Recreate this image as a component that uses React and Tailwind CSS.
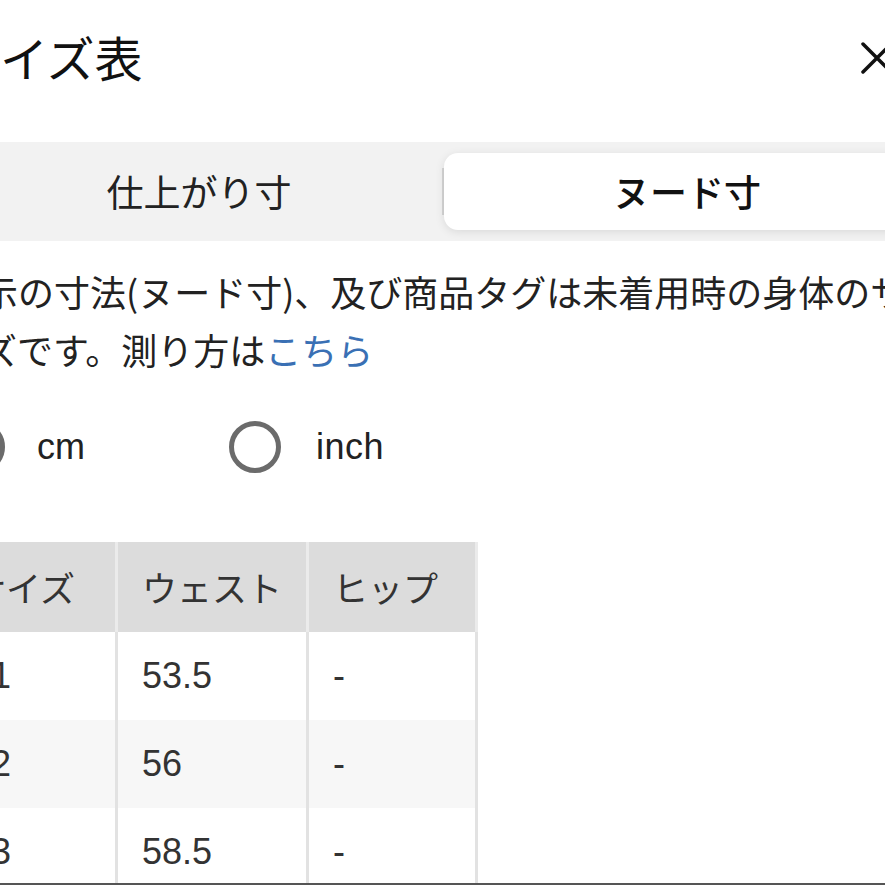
import React from "react";

const jp = { fontFamily: '"Noto Sans CJK JP", sans-serif' };
const mix = { fontFamily: '"Liberation Sans", "Noto Sans CJK JP", sans-serif' };

function Radio({ checked }) {
  return (
    <div className="w-[52px] h-[52px] rounded-full border-[5px] border-[#6b6b6b] flex items-center justify-center shrink-0">
      {checked && <div className="w-[26px] h-[26px] rounded-full bg-[#333]" />}
    </div>
  );
}

const rows = [
  ["01", "53.5", "-"],
  ["02", "56", "-"],
  ["03", "58.5", "-"],
];

export default function App() {
  return (
    <div className="w-[885px] h-[885px] overflow-hidden bg-white flex flex-col text-[#222]" style={mix}>
      <div className="flex-1 overflow-hidden">
        <div className="ml-[-54px] w-[994px]">
          {/* Header */}
          <div className="h-[116px] flex items-center justify-between">
            <div className="ml-[6px] mb-[4px] text-[48px] leading-none text-[#111]" style={jp}>サイズ表</div>
            <svg width="32" height="32" viewBox="0 0 32 32" className="mr-[47px]">
              <path d="M2 2 L30 30 M30 2 L2 30" stroke="#111" strokeWidth="3.5" strokeLinecap="round" />
            </svg>
          </div>

          {/* Segmented control */}
          <div className="mt-[26px] h-[99px] bg-[#f2f2f2] px-[10px] py-[11px] flex items-center">
            <div className="flex-1 h-full flex items-center justify-center text-[37px] text-[#222]" style={jp}>仕上がり寸</div>
            <div className="w-[2px] h-[47px] bg-[#d4d4d4]" />
            <div className="flex-1 h-full bg-white rounded-[14px] shadow-[0_2px_10px_rgba(0,0,0,0.10)] flex items-center justify-center text-[37px] font-medium text-[#111]" style={jp}>ヌード寸</div>
          </div>

          {/* Description */}
          <p className="mt-[21px] text-[36px] leading-[58px] text-[#222]" style={jp}>
            表示の寸法(ヌード寸)、及び商品タグは未着用時の身体のサ<br />
            イズです。測り方は<span className="text-[#3a70b4]">こちら</span>
          </p>

          {/* Radios */}
          <div className="mt-[43px] ml-[7px] flex items-center">
            <div className="w-[276px] flex items-center gap-[32px]">
              <Radio checked />
              <span className="text-[36px] leading-none text-[#222]">cm</span>
            </div>
            <div className="flex items-center gap-[35px]">
              <Radio />
              <span className="text-[36px] leading-none text-[#222] tracking-[0.5px]">inch</span>
            </div>
          </div>

          {/* Table */}
          <div className="mt-[69px] w-[532px] text-[#333]">
            <div className="flex h-[90px] bg-[#dcdcdc]">
              <div className="w-[169px] pl-[25px] flex items-center text-[35px]" style={jp}>サイズ</div>
              <div className="w-[191px] border-l-[3px] border-[#ebebeb] pl-[24px] flex items-center text-[35px]" style={jp}>ウェスト</div>
              <div className="w-[172px] border-l-[3px] border-r-[3px] border-[#ebebeb] pl-[24px] flex items-center text-[35px]" style={jp}>ヒップ</div>
            </div>
            {rows.map((r, i) => (
              <div key={i} className={`flex h-[88px] ${i % 2 === 1 ? "bg-[#f7f7f7]" : "bg-white"}`}>
                <div className="w-[169px] pl-[25px] flex items-center text-[36px]">{r[0]}</div>
                <div className="w-[191px] border-l-[3px] border-[#e2e2e2] pl-[24px] flex items-center text-[36px]">{r[1]}</div>
                <div className="w-[172px] border-l-[3px] border-r-[3px] border-[#e2e2e2] pl-[24px] flex items-center text-[36px]">{r[2]}</div>
              </div>
            ))}
          </div>
        </div>
      </div>
      <div className="h-[2px] bg-[#555] shrink-0" />
    </div>
  );
}
